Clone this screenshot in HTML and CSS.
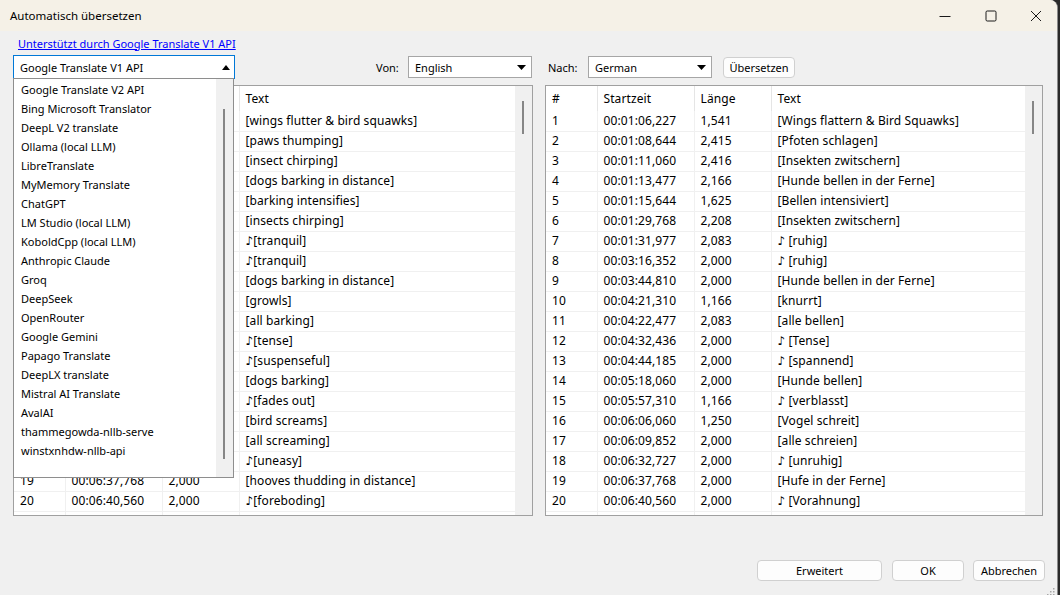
FILE: index.html
```html
<!DOCTYPE html>
<html lang="de">
<head>
<meta charset="utf-8">
<title>Automatisch übersetzen</title>
<link rel="stylesheet" href="styles.css">
</head>
<body>
<div class="window">
  <div class="titlebar">
    <div class="title">Automatisch übersetzen</div>
    <div class="controls">
      <span class="ctl"><svg width="12" height="12" viewBox="0 0 12 12"><path d="M0.5 6.5h11" stroke="#1a1a1a" stroke-width="1"/></svg></span>
      <span class="ctl"><svg width="12" height="12" viewBox="0 0 12 12"><rect x="1" y="1" width="10" height="10" rx="1.2" fill="none" stroke="#1a1a1a" stroke-width="1"/></svg></span>
      <span class="ctl"><svg width="12" height="12" viewBox="0 0 12 12"><path d="M1 1L11 11M11 1L1 11" stroke="#1a1a1a" stroke-width="1"/></svg></span>
    </div>
  </div>
  <div class="content">
    <div class="linkrow"><a href="#" class="link">Unterstützt durch Google Translate V1 API</a></div>
    <div class="toolbar">
      <div class="provider">
        <div class="combo combo-open">
          <span>Google Translate V1 API</span>
          <svg class="arrow" width="8" height="5" viewBox="0 0 8 5"><path d="M0 5L4 0L8 5Z" fill="#000"/></svg>
        </div>
        <div class="dropdown">
          <ul class="items">
            <li>Google Translate V2 API</li>
            <li>Bing Microsoft Translator</li>
            <li>DeepL V2 translate</li>
            <li>Ollama (local LLM)</li>
            <li>LibreTranslate</li>
            <li>MyMemory Translate</li>
            <li>ChatGPT</li>
            <li>LM Studio (local LLM)</li>
            <li>KoboldCpp (local LLM)</li>
            <li>Anthropic Claude</li>
            <li>Groq</li>
            <li>DeepSeek</li>
            <li>OpenRouter</li>
            <li>Google Gemini</li>
            <li>Papago Translate</li>
            <li>DeepLX translate</li>
            <li>Mistral AI Translate</li>
            <li>AvalAI</li>
            <li>thammegowda-nllb-serve</li>
            <li>winstxnhdw-nllb-api</li>
          </ul>
          <div class="dd-scroll"><div class="dd-thumb"></div></div>
        </div>
      </div>
      <label class="lbl lbl-von">Von:</label>
      <div class="combo combo-lang">
        <span>English</span>
        <svg class="arrow" width="9" height="5" viewBox="0 0 9 5"><path d="M0 0L4.5 5L9 0Z" fill="#000"/></svg>
      </div>
      <label class="lbl lbl-nach">Nach:</label>
      <div class="combo combo-lang">
        <span>German</span>
        <svg class="arrow" width="9" height="5" viewBox="0 0 9 5"><path d="M0 0L4.5 5L9 0Z" fill="#000"/></svg>
      </div>
      <button class="btn btn-translate">Übersetzen</button>
    </div>

    <div class="grids">
      <div class="grid grid-left">
        <div class="grid-body">
          <table>
            <colgroup><col class="c1"><col class="c2"><col class="c3"><col></colgroup>
            <thead><tr><th>#</th><th>Startzeit</th><th>Länge</th><th>Text</th></tr></thead>
            <tbody>
              <tr><td>1</td><td>00:01:06,227</td><td>1,541</td><td>[wings flutter &amp; bird squawks]</td></tr>
              <tr><td>2</td><td>00:01:08,644</td><td>2,415</td><td>[paws thumping]</td></tr>
              <tr><td>3</td><td>00:01:11,060</td><td>2,416</td><td>[insect chirping]</td></tr>
              <tr><td>4</td><td>00:01:13,477</td><td>2,166</td><td>[dogs barking in distance]</td></tr>
              <tr><td>5</td><td>00:01:15,644</td><td>1,625</td><td>[barking intensifies]</td></tr>
              <tr><td>6</td><td>00:01:29,768</td><td>2,208</td><td>[insects chirping]</td></tr>
              <tr><td>7</td><td>00:01:31,977</td><td>2,083</td><td>♪[tranquil]</td></tr>
              <tr><td>8</td><td>00:03:16,352</td><td>2,000</td><td>♪[tranquil]</td></tr>
              <tr><td>9</td><td>00:03:44,810</td><td>2,000</td><td>[dogs barking in distance]</td></tr>
              <tr><td>10</td><td>00:04:21,310</td><td>1,166</td><td>[growls]</td></tr>
              <tr><td>11</td><td>00:04:22,477</td><td>2,083</td><td>[all barking]</td></tr>
              <tr><td>12</td><td>00:04:32,436</td><td>2,000</td><td>♪[tense]</td></tr>
              <tr><td>13</td><td>00:04:44,185</td><td>2,000</td><td>♪[suspenseful]</td></tr>
              <tr><td>14</td><td>00:05:18,060</td><td>2,000</td><td>[dogs barking]</td></tr>
              <tr><td>15</td><td>00:05:57,310</td><td>1,166</td><td>♪[fades out]</td></tr>
              <tr><td>16</td><td>00:06:06,060</td><td>1,250</td><td>[bird screams]</td></tr>
              <tr><td>17</td><td>00:06:09,852</td><td>2,000</td><td>[all screaming]</td></tr>
              <tr><td>18</td><td>00:06:32,727</td><td>2,000</td><td>♪[uneasy]</td></tr>
              <tr><td>19</td><td>00:06:37,768</td><td>2,000</td><td>[hooves thudding in distance]</td></tr>
              <tr><td>20</td><td>00:06:40,560</td><td>2,000</td><td>♪[foreboding]</td></tr>
              <tr><td>&nbsp;</td><td>&nbsp;</td><td>&nbsp;</td><td>&nbsp;</td></tr>
            </tbody>
          </table>
        </div>
        <div class="vscroll"><div class="thumb"></div></div>
      </div>

      <div class="grid grid-right">
        <div class="grid-body">
          <table>
            <colgroup><col class="c1"><col class="c2"><col class="c3"><col></colgroup>
            <thead><tr><th>#</th><th>Startzeit</th><th>Länge</th><th>Text</th></tr></thead>
            <tbody>
              <tr><td>1</td><td>00:01:06,227</td><td>1,541</td><td>[Wings flattern &amp; Bird Squawks]</td></tr>
              <tr><td>2</td><td>00:01:08,644</td><td>2,415</td><td>[Pfoten schlagen]</td></tr>
              <tr><td>3</td><td>00:01:11,060</td><td>2,416</td><td>[Insekten zwitschern]</td></tr>
              <tr><td>4</td><td>00:01:13,477</td><td>2,166</td><td>[Hunde bellen in der Ferne]</td></tr>
              <tr><td>5</td><td>00:01:15,644</td><td>1,625</td><td>[Bellen intensiviert]</td></tr>
              <tr><td>6</td><td>00:01:29,768</td><td>2,208</td><td>[Insekten zwitschern]</td></tr>
              <tr><td>7</td><td>00:01:31,977</td><td>2,083</td><td>♪ [ruhig]</td></tr>
              <tr><td>8</td><td>00:03:16,352</td><td>2,000</td><td>♪ [ruhig]</td></tr>
              <tr><td>9</td><td>00:03:44,810</td><td>2,000</td><td>[Hunde bellen in der Ferne]</td></tr>
              <tr><td>10</td><td>00:04:21,310</td><td>1,166</td><td>[knurrt]</td></tr>
              <tr><td>11</td><td>00:04:22,477</td><td>2,083</td><td>[alle bellen]</td></tr>
              <tr><td>12</td><td>00:04:32,436</td><td>2,000</td><td>♪ [Tense]</td></tr>
              <tr><td>13</td><td>00:04:44,185</td><td>2,000</td><td>♪ [spannend]</td></tr>
              <tr><td>14</td><td>00:05:18,060</td><td>2,000</td><td>[Hunde bellen]</td></tr>
              <tr><td>15</td><td>00:05:57,310</td><td>1,166</td><td>♪ [verblasst]</td></tr>
              <tr><td>16</td><td>00:06:06,060</td><td>1,250</td><td>[Vogel schreit]</td></tr>
              <tr><td>17</td><td>00:06:09,852</td><td>2,000</td><td>[alle schreien]</td></tr>
              <tr><td>18</td><td>00:06:32,727</td><td>2,000</td><td>♪ [unruhig]</td></tr>
              <tr><td>19</td><td>00:06:37,768</td><td>2,000</td><td>[Hufe in der Ferne]</td></tr>
              <tr><td>20</td><td>00:06:40,560</td><td>2,000</td><td>♪ [Vorahnung]</td></tr>
              <tr><td>&nbsp;</td><td>&nbsp;</td><td>&nbsp;</td><td>&nbsp;</td></tr>
            </tbody>
          </table>
        </div>
        <div class="vscroll"><div class="thumb"></div></div>
      </div>
    </div>

    <div class="footer">
      <button class="btn btn-wide">Erweitert</button>
      <button class="btn btn-ok">OK</button>
      <button class="btn btn-cancel">Abbrechen</button>
    </div>
  </div>
  <div class="grip">
    <svg width="9" height="9" viewBox="0 0 9 9" fill="#a8a8a8">
      <rect x="7" y="1" width="1.5" height="1.5"/>
      <rect x="4" y="4" width="1.5" height="1.5"/><rect x="7" y="4" width="1.5" height="1.5"/>
      <rect x="1" y="7" width="1.5" height="1.5"/><rect x="4" y="7" width="1.5" height="1.5"/><rect x="7" y="7" width="1.5" height="1.5"/>
    </svg>
  </div>
</div>
</body>
</html>
```

FILE: styles.css
```css
* { box-sizing: border-box; }
html, body { margin: 0; padding: 0; }
body {
  width: 1060px;
  height: 595px;
  overflow: hidden;
  background: #2a2a2a;
  font-family: "Noto Sans", "DejaVu Sans", sans-serif;
  font-size: 11px;
  color: #000;
}
.window {
  position: relative;
  width: 1058px;
  height: 595px;
  background: #f0f0f0;
  border-right: 1px solid #8c8c8c;
  border-top-right-radius: 8px;
  overflow: hidden;
  display: flex;
  flex-direction: column;
}
.titlebar {
  height: 31px;
  flex: none;
  background: #f5f1e7;
  display: flex;
  align-items: center;
  justify-content: space-between;
}
.title { padding-left: 10px; padding-bottom: 1px; font-size: 11.5px; }
.controls { display: flex; height: 100%; margin-right: -2px; }
.ctl {
  width: 45.5px;
  display: flex;
  align-items: center;
  justify-content: center;
}
.content {
  flex: 1;
  display: flex;
  flex-direction: column;
  padding: 2px 14px 0 13px;
}
.linkrow { height: 22px; padding-left: 5px; padding-bottom: 2px; display: flex; align-items: center; }
.link { color: #0000ff; text-decoration: underline; }
.toolbar {
  height: 24px;
  display: flex;
  align-items: center;
  position: relative;
  z-index: 5;
}
.provider { position: relative; width: 222px; height: 24px; flex: none; }
.combo {
  display: flex;
  align-items: center;
  justify-content: space-between;
  background: #fff;
  border: 1px solid #a6a6a6;
  padding: 0 5px 0 6px;
  flex: none;
}
.combo-open {
  height: 24px;
  border-color: #0078d7;
  padding-left: 6px;
  padding-right: 4px;
}
.combo-lang { width: 124px; height: 22px; padding-left: 6px; padding-right: 5px; }
.arrow { flex: none; }
.dropdown {
  position: absolute;
  left: 0;
  top: 23px;
  width: 221px;
  height: 400px;
  background: #fff;
  border: 1px solid #8e8e8e;
  display: flex;
}
.items {
  list-style: none;
  margin: 0;
  padding: 1px 0 0 7px;
  flex: 1;
}
.items li { height: 19px; line-height: 19px; white-space: nowrap; }
.dd-scroll {
  width: 17px;
  background: #f0f0f0;
  position: relative;
}
.dd-thumb {
  position: absolute;
  left: 7px;
  top: 30px;
  width: 2px;
  height: 350px;
  background: #868686;
}
.lbl { flex: none; }
.lbl-von { margin-left: 141px; width: 32px; }
.lbl-nach { margin-left: 16px; width: 40px; }
.btn {
  font-family: inherit;
  font-size: 11px;
  color: #000;
  background: #fdfdfd;
  border: 1px solid #d0d0d0;
  border-radius: 4px;
  padding: 0;
  height: 21px;
  flex: none;
}
.btn-translate { width: 72px; margin-left: 11px; }
.grids {
  margin-top: 6px;
  display: flex;
  gap: 12px;
  height: 431px;
}
.grid {
  border: 1px solid #a0a0a0;
  background: #fff;
  display: flex;
  overflow: hidden;
  height: 431px;
  font-size: 12px;
  letter-spacing: 0.1px;
}
.grid-left { width: 520px; }
.grid-right { width: 498px; }
.grid-body { flex: 1; overflow: hidden; }
table {
  width: 100%;
  border-collapse: collapse;
  table-layout: fixed;
}
col.c1 { width: 51px; }
col.c2 { width: 97px; }
col.c3 { width: 77px; }
th {
  height: 25px;
  font-weight: normal;
  text-align: left;
  padding: 0 6px;
  border-right: 1px solid #e5e5e5;
  white-space: nowrap;
}
tbody tr { height: 20px; }
td {
  padding: 0 6px;
  line-height: 18px;
  border-right: 1px solid #f0f0f0;
  border-bottom: 1px solid #f0f0f0;
  white-space: nowrap;
  overflow: hidden;
}
th:last-child, td:last-child { border-right: none; }
.vscroll {
  width: 17px;
  flex: none;
  background: #f0f0f0;
  position: relative;
}
.thumb {
  position: absolute;
  left: 7px;
  top: 15px;
  width: 2px;
  height: 33px;
  background: #868686;
}
.footer {
  display: flex;
  justify-content: flex-end;
  margin-top: 44px;
  margin-right: -2px;
}
.btn-wide { width: 125px; }
.btn-ok { width: 72px; margin-left: 10px; }
.btn-cancel { width: 72px; margin-left: 9px; }
.grip {
  position: absolute;
  right: 2px;
  bottom: 2px;
  width: 9px;
  height: 9px;
}
```
